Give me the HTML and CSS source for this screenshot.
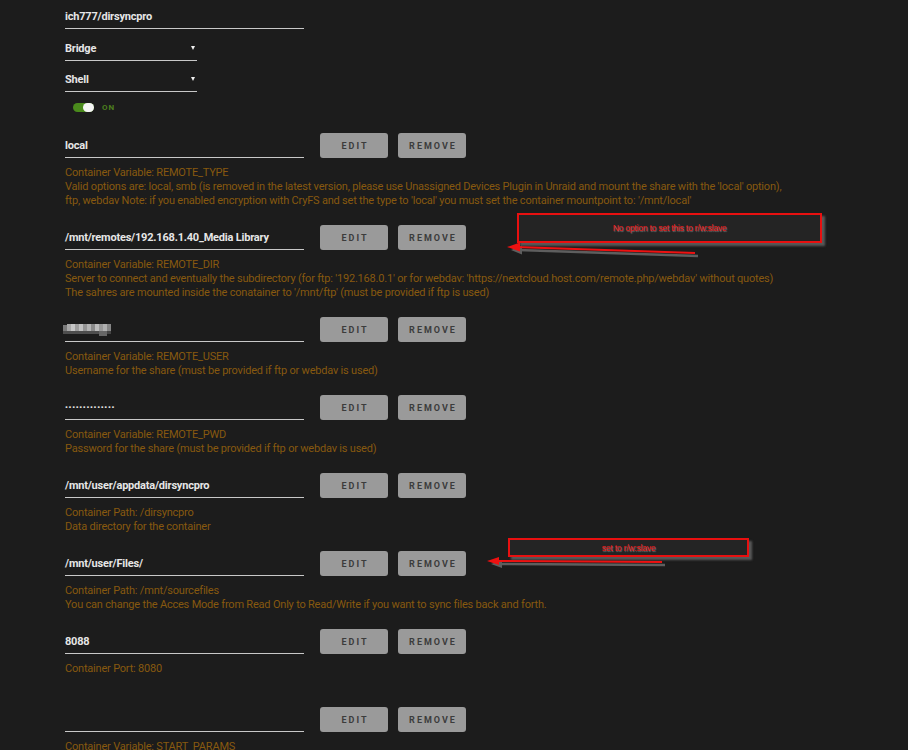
FILE: index.html
```html
<!DOCTYPE html>
<html>
<head>
<meta charset="utf-8">
<link rel="stylesheet" href="styles.css">
</head>
<body>
<div class="page">
  <div class="field wide"><span class="val">ich777/dirsyncpro</span></div>
  <div class="field select sel1"><span class="val">Bridge</span><span class="caret"></span></div>
  <div class="field select sel2"><span class="val">Shell</span><span class="caret"></span></div>
  <div class="switch-row"><span class="switch"><span class="knob"></span></span><span class="on">ON</span></div>

  <div class="rows">
    <div class="row">
      <div class="line">
        <div class="field wide"><span class="val">local</span></div>
        <button class="btn">EDIT</button><button class="btn">REMOVE</button>
      </div>
      <div class="desc">Container Variable: REMOTE_TYPE<br>Valid options are: local, smb (is removed in the latest version, please use Unassigned Devices Plugin in Unraid and mount the share with the 'local' option),<br>ftp, webdav Note: if you enabled encryption with CryFS and set the type to 'local' you must set the container mountpoint to: '/mnt/local'</div>
    </div>
    <div class="row">
      <div class="line">
        <div class="field wide"><span class="val">/mnt/remotes/192.168.1.40_Media Library</span></div>
        <button class="btn">EDIT</button><button class="btn">REMOVE</button>
      </div>
      <div class="desc">Container Variable: REMOTE_DIR<br>Server to connect and eventually the subdirectory (for ftp: '192.168.0.1' or for webdav: 'https://nextcloud.host.com/remote.php/webdav' without quotes)<br>The sahres are mounted inside the conatainer to '/mnt/ftp' (must be provided if ftp is used)</div>
    </div>
    <div class="row">
      <div class="line">
        <div class="field wide">
          <svg class="mosaic" width="48" height="13" viewBox="0 0 48 13">
            <rect x="0" y="2" width="4" height="6" fill="#7a7a7a"/>
            <rect x="4" y="1" width="4" height="7" fill="#a8a8a8"/>
            <rect x="8" y="1" width="4" height="7" fill="#c6c6c6"/>
            <rect x="12" y="1" width="4" height="7" fill="#9e9e9e"/>
            <rect x="16" y="1" width="4" height="7" fill="#c0c0c0"/>
            <rect x="20" y="1" width="4" height="7" fill="#949494"/>
            <rect x="24" y="1" width="4" height="7" fill="#b4b4b4"/>
            <rect x="28" y="1" width="4" height="7" fill="#8a8a8a"/>
            <rect x="32" y="1" width="4" height="7" fill="#bcbcbc"/>
            <rect x="36" y="1" width="4" height="7" fill="#989898"/>
            <rect x="40" y="1" width="4" height="7" fill="#b0b0b0"/>
            <rect x="44" y="1" width="4" height="7" fill="#868686"/>
            <rect x="0" y="8" width="36" height="3" fill="#4e4e4e"/>
            <rect x="36" y="8" width="8" height="5" fill="#666666"/>
            <rect x="44" y="8" width="4" height="3" fill="#444444"/>
          </svg>
        </div>
        <button class="btn">EDIT</button><button class="btn">REMOVE</button>
      </div>
      <div class="desc">Container Variable: REMOTE_USER<br>Username for the share (must be provided if ftp or webdav is used)</div>
    </div>
    <div class="row">
      <div class="line">
        <div class="field wide"><span class="val pwd">••••••••••••••</span></div>
        <button class="btn">EDIT</button><button class="btn">REMOVE</button>
      </div>
      <div class="desc">Container Variable: REMOTE_PWD<br>Password for the share (must be provided if ftp or webdav is used)</div>
    </div>
    <div class="row">
      <div class="line">
        <div class="field wide"><span class="val">/mnt/user/appdata/dirsyncpro</span></div>
        <button class="btn">EDIT</button><button class="btn">REMOVE</button>
      </div>
      <div class="desc">Container Path: /dirsyncpro<br>Data directory for the container</div>
    </div>
    <div class="row">
      <div class="line">
        <div class="field wide"><span class="val">/mnt/user/Files/</span></div>
        <button class="btn">EDIT</button><button class="btn">REMOVE</button>
      </div>
      <div class="desc">Container Path: /mnt/sourcefiles<br>You can change the Acces Mode from Read Only to Read/Write if you want to sync files back and forth.</div>
    </div>
    <div class="row">
      <div class="line">
        <div class="field wide"><span class="val">8088</span></div>
        <button class="btn">EDIT</button><button class="btn">REMOVE</button>
      </div>
      <div class="desc">Container Port: 8080</div>
    </div>
    <div class="row">
      <div class="line">
        <div class="field wide"><span class="val"></span></div>
        <button class="btn">EDIT</button><button class="btn">REMOVE</button>
      </div>
      <div class="desc">Container Variable: START_PARAMS</div>
    </div>
  </div>

  <div class="note note1">No option to set this to r/w:slave</div>
  <div class="note note2">set to r/w:slave</div>
  <svg class="arrows" width="908" height="750" viewBox="0 0 908 750">
    <g fill="#5e5e5e" stroke="#5e5e5e">
      <line x1="698" y1="256" x2="518" y2="250" stroke-width="2.5"/>
      <polygon points="511,250 522,245.5 522,254.5" stroke="none"/>
      <line x1="665" y1="565" x2="498" y2="564" stroke-width="2.5"/>
      <polygon points="491,564 502,560 502,568" stroke="none"/>
    </g>
    <g fill="#ee1111" stroke="#ee1111">
      <line x1="695" y1="253" x2="515" y2="247" stroke-width="2"/>
      <polygon points="507,247 520,242.5 520,251.5" stroke="none"/>
      <line x1="662" y1="562" x2="494" y2="561" stroke-width="2"/>
      <polygon points="487,561 499,557 499,565" stroke="none"/>
    </g>
  </svg>
</div>
</body>
</html>
```

FILE: styles.css
```css
html, body {
  margin: 0;
  padding: 0;
  background: #1c1c1c;
}

.page {
  position: relative;
  width: 908px;
  height: 750px;
  overflow: hidden;
  box-sizing: border-box;
  padding: 4px 0 0 65px;
  font-family: Roboto, "Liberation Sans", sans-serif;
}

.field {
  box-sizing: border-box;
  height: 25px;
  border-bottom: 1px solid #c8c8c8;
  display: flex;
  align-items: center;
}

.wide {
  width: 239px;
}

.val {
  color: #e6e6e6;
  font-size: 11px;
  font-weight: 700;
  letter-spacing: -0.2px;
  white-space: nowrap;
}

.pwd {
  font-size: 8px;
  letter-spacing: 0.7px;
}

.select {
  width: 132px;
  justify-content: space-between;
  padding-right: 2px;
}

.sel1 {
  margin-top: 7px;
}

.sel2 {
  margin-top: 6px;
}

.caret {
  width: 0;
  height: 0;
  border-left: 2.5px solid transparent;
  border-right: 2.5px solid transparent;
  border-top: 4px solid #f0f0f0;
}

.switch-row {
  display: flex;
  align-items: center;
  margin-top: 11px;
  padding-left: 8px;
  height: 9px;
}

.switch {
  position: relative;
  width: 21px;
  height: 9px;
  border-radius: 4.5px;
  background: #4a8a1c;
  display: flex;
  justify-content: flex-end;
}

.knob {
  width: 11px;
  height: 9px;
  border-radius: 4.5px;
  background: #f4f4f4;
}

.on {
  margin-left: 8px;
  color: #4c7f1e;
  font-size: 8px;
  font-weight: 700;
  letter-spacing: 1px;
}

.rows {
  margin-top: 21px;
}

.row {
  padding-bottom: 17px;
}

.line {
  display: flex;
  align-items: center;
  height: 25px;
}

.btn {
  box-sizing: border-box;
  width: 68px;
  height: 25px;
  margin: 0 0 0 16px;
  padding: 0;
  border: 0;
  border-radius: 3px;
  background: #9a9a9a;
  color: #3c3c3c;
  font-family: Roboto, "Liberation Sans", sans-serif;
  font-size: 9px;
  font-weight: 700;
  letter-spacing: 2px;
  text-indent: 2px;
}

.btn + .btn {
  margin-left: 10px;
}

.desc {
  margin-top: 8px;
  min-height: 28px;
  color: #87590f;
  font-size: 11px;
  letter-spacing: -0.2px;
  line-height: 14px;
  white-space: nowrap;
}

.mosaic {
  display: block;
  margin-left: -2px;
}

.note {
  position: absolute;
  box-sizing: border-box;
  border: 2px solid #e81010;
  background: #242424;
  box-shadow: 3px 3px 2px #585858;
  color: #ee1a1a;
  font-family: "Liberation Sans", Arial, sans-serif;
  font-size: 8.5px;
  letter-spacing: -0.2px;
  text-shadow: 1px 1px 1px #777;
  display: flex;
  align-items: center;
  justify-content: center;
}

.note1 {
  left: 517px;
  top: 213px;
  width: 305px;
  height: 30px;
}

.note2 {
  left: 508px;
  top: 538px;
  width: 241px;
  height: 19px;
}

.arrows {
  position: absolute;
  left: 0;
  top: 0;
  pointer-events: none;
}
```
